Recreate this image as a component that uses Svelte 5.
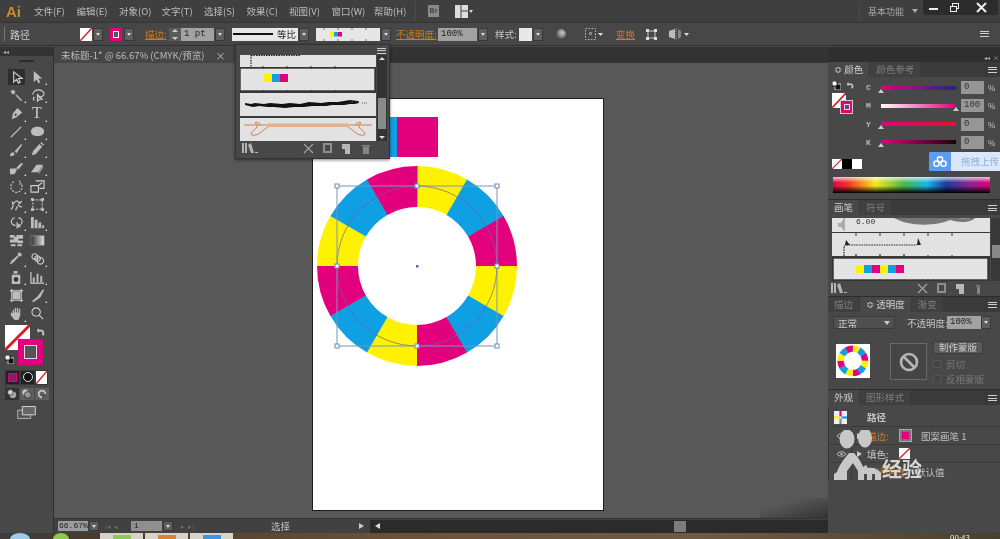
<script>
  const menus = ['文件(F)', '编辑(E)', '对象(O)', '文字(T)', '选择(S)', '效果(C)', '视图(V)', '窗口(W)', '帮助(H)'];

  // tool icons on a 16x16 box: d is filled, l is stroked
  const toolGroups = [
    [
      { l: 'M5 2v11l3-3 2 4 2-1-2-4h4z', selected: true },
      { d: 'M4 1v12l3-3 2 4 2-1-2-4h4z', more: true }
    ],
    [
      { d: 'M8 7l6 6-1 1-6-6zM4 1l1 2 2 0-1 2 1 2-2-1-2 1 0-2-2-1 2-1z', more: true },
      { l: 'M3 7c0-3 3-5 6-5s6 2 6 4-3 4-6 4M5 10c-2 0-2 3 0 3M8 7v7l2-2 3 0z', more: true }
    ],
    [
      { d: 'M3 14l1-6 5-6 5 5-6 5zM7 8a1.3 1.3 0 1 0 .1 0z', more: true },
      { text: 'T', more: true },
      { l: 'M2 14L13 3', more: true },
      { d: 'M8 3c4 0 7 2 7 5s-3 5-7 5-7-2-7-5 3-5 7-5z', more: true },
      { d: 'M1 15c0-3 2-4 4-4l1 2c-1 2-3 2-5 2zM6 10l7-8 1 1-6 9z', more: true },
      { d: 'M2 14l1-4 7-8 3 3-7 8zM11 1l1-1 3 3-1 1z', more: true },
      { d: 'M1 8h8l-3 6H1zM8 7l5-5 2 1-5 6z', more: true },
      { d: 'M1 12l6-8h7l-5 8zM9 13l5-8v2l-5 7z', more: true }
    ],
    [
      { l: 'M5 3a6 6 0 1 0 8 2M11 2l2 3-3 1', dash: true, more: true },
      { l: 'M1 7h8v7H1zM6 2h9v8h-5M9 7l4-3', more: true },
      { l: 'M2 13c2-1 3-4 2-6 2 0 2-3 5-3 0 2 2 2 4 1-1 2-3 2-3 4 1 1 3 2 4 1M3 5l2 2M9 10l-2 4', more: true },
      { l: 'M3 3h10v10H3z', dash: true, d: 'M1 1h3v3H1zM12 1h3v3h-3zM1 12h3v3H1zM12 12h3v3h-3z', more: true },
      { l: 'M6 3a4 4 0 1 0 1 8M10 3a4 4 0 0 1 0 8', d: 'M8 7v8l2-2h3z', more: true },
      { d: 'M1 2h3v12H1zM5 5h3v9H5zM9 8h3v6H9zM13 11h2v3h-2z', more: true },
      { d: 'M1 2h5v3H1zM8 2h7v4H8zM1 7h6v3H1zM9 8h6v3H9zM2 12h5v2H2zM9 12h5v2H9zM5 4h5v6H5z' },
      { grad: true },
      { d: 'M11 1l3 3-2 2-1-1-6 7-3 2-1-1 2-3 7-6-1-1z', more: true },
      { l: 'M5 3a3 3 0 1 0 .1 0M8 5a3 3 0 1 0 .1 0M11 7a3.5 3.5 0 1 0 .1 0', more: true },
      { d: 'M5 1h4v3H5zM3 5h9v10H3z', more: true, hole: true },
      { l: 'M1 2v12h14', d: 'M3 8h2v5H3zM7 4h2v9H7zM11 6h2v7h-2z', more: true },
      { l: 'M1 3h14M1 13h14M3 1v14M13 1v14', d: 'M4 4h8v8H4z' },
      { d: 'M2 14l6-5 6-8 1 1-4 8-7 5z', more: true },
      { d: 'M4 8V4h1.4v3h.8V2h1.4v5h.8V2h1.4v5h.8V3h1.4v7l-2 5H6L2 10V7h1z', more: true },
      { l: 'M6.5 2a4.5 4.5 0 1 0 .1 0M10 10l4 4', more: false }
    ]
  ];

  const sliders = [
    { label: 'C', cls: 'c', value: '0', at: 0 },
    { label: 'M', cls: 'm', value: '100', at: 100 },
    { label: 'Y', cls: 'y', value: '0', at: 0 },
    { label: 'K', cls: 'k', value: '0', at: 0 }
  ];

  const ringColors = ['#fff200', '#0f9fe3', '#e2007d'];
  const cx = 104, cy = 167, R = 100, r = 59;

  function pt(radius, deg) {
    const a = (deg * Math.PI) / 180;
    return (cx + radius * Math.sin(a)).toFixed(2) + ' ' + (cy - radius * Math.cos(a)).toFixed(2);
  }

  const segments = Array.from({ length: 12 }, (_, i) => {
    const a = i * 30, b = a + 30.3;
    return {
      fill: ringColors[i % 3],
      d: `M${pt(R, a)}A${R} ${R} 0 0 1 ${pt(R, b)}L${pt(r, b)}A${r} ${r} 0 0 0 ${pt(r, a)}Z`
    };
  });

  const handles = [[24, 87], [104, 87], [184, 87], [24, 167], [184, 167], [24, 247], [104, 247], [184, 247]];
  const brushTicks = [0, 24, 48, 72];
</script>

{#snippet arrowBtn(kind = '')}
  <span class="arrow-btn {kind}"><i></i></span>
{/snippet}

{#snippet noneSwatch(cls)}
  <svg class={cls} viewBox="0 0 12 12" preserveAspectRatio="none">
    <rect width="12" height="12" fill="#fff" />
    <path d="M0 12L12 0" stroke="#d21f26" stroke-width="1.4" />
  </svg>
{/snippet}

{#snippet panelIcons(cls, shift)}
  <svg class="panel-icons {cls}" viewBox="0 0 150 14">
    <path d="M1 2h2v10H1zM4 2h2v10H4zM7 4l3-2 3 10h-3zM14 11h3v1h-3z" fill="#b4b4b4" />
    <g transform="translate({shift} 0)">
      <path d="M63 3l9 9M72 3l-9 9" stroke="#a2a2a2" stroke-width="1.2" />
      <path d="M82 2h9v10h-9zM84 4h5v6h-5z" fill="#8e8e8e" fill-rule="evenodd" />
      <path d="M101 3h8v10h-5V8h-3z" fill="#b8b8b8" />
      <path d="M121 4h8v1.500h-8zM122 6h6v7h-6z" fill="#858585" />
    </g>
  </svg>
{/snippet}

{#snippet brushRows()}
  <svg class="brush-art" viewBox="0 0 136 86">
    <rect width="136" height="86" fill="#3a3a3a" />
    <rect y="0" width="136" height="12" fill="#e2e2e2" />
    <path d="M11 0v12" stroke="#222" stroke-width="1.2" stroke-dasharray="1.5 1" />
    <path d="M11 0.5h50" stroke="#222" stroke-dasharray="1.5 1" />
    <rect x="0" y="13" width="135" height="23" fill="#e4e4e4" stroke="#333" stroke-width="1.4" />
    {#each brushTicks as t}
      <path d="M{23 + t} 11v3M{23 + t} 35v3" stroke="#333" />
    {/each}
    <rect x="24" y="19" width="8" height="8" fill="#fff200" />
    <rect x="32" y="19" width="8" height="8" fill="#0f9fe3" />
    <rect x="40" y="19" width="8" height="8" fill="#e2007d" />
    <rect y="38" width="136" height="23" fill="#e2e2e2" />
    <path d="M5 48l6 1 4-1 9 1 6-1 12 1 8-1 10 1 9-2 12 1 8-1 9 0 12-2 8 1c2 1 2 3-8 3l-6 1-12 0-6 1-14 0-8 1-10 0-9 1-11-1-6 0-9-1-6 1-8-2z" fill="#111" />
    <path d="M110 47h4M116 47h4M122 48h5" stroke="#555" stroke-dasharray="1 1" />
    <rect y="63" width="136" height="23" fill="#e2e2e2" />
    <path d="M4 70h128" stroke="#c98554" />
    <path d="M28 68.500h80v3.500H28z" fill="#e4b08e" />
    <path d="M20 70c0-3-3-3-5-2 4 1 2 5-1 7-4 3-4 6 1 5 4 0 8-5 13-8M116 70c0-3 3-3 5-2-4 1-2 5 1 7 4 3 4 6-1 5-4 0-8-5-13-8" fill="none" stroke="#d17b43" />
  </svg>
{/snippet}

<div class="app">
  <header class="menubar">
    <span class="logo">Ai</span>
    <nav class="menus">
      {#each menus as m}
        <span class="menu">{m}</span>
      {/each}
    </nav>
    <span class="vsep first"></span>
    <span class="br">Br</span>
    <svg class="arrange" viewBox="0 0 18 13">
      <path d="M0 0h13v13H0z" fill="#ddd" />
      <path d="M6 0v13M6 6h7" stroke="#444" />
      <path d="M14 5h4l-2 3z" fill="#ddd" />
    </svg>
    <span class="vsep second"></span>
    <span class="workspace-name">基本功能</span>
    <i class="tri workspace-tri"></i>
    <div class="win-btns">
      <span class="win"><svg viewBox="0 0 21 15"><path d="M6 8h9v2H6z" fill="#eee" /></svg></span>
      <span class="win"><svg viewBox="0 0 21 15"><path d="M8 3h7v6h-2v3H6V6h2zM9 4v2h4v2h1V4zM7 7v4h5V7z" fill="#eee" fill-rule="evenodd" /></svg></span>
      <span class="win close"><svg viewBox="0 0 33 15"><path d="M12 3l9 9M21 3l-9 9" stroke="#eee" stroke-width="2" /></svg></span>
    </div>
  </header>

  <div class="controlbar">
    <span class="handle"></span>
    <span class="ctl-label">路径</span>
    {@render noneSwatch('ctl-fill')}
    {@render arrowBtn('a1')}
    <span class="ctl-stroke"><i></i></span>
    {@render arrowBtn('a2')}
    <span class="orange stroke-link">描边:</span>
    <span class="spinner"><i></i><b></b></span>
    <span class="field pt">1 pt</span>
    {@render arrowBtn('a3')}
    <span class="line-drop"><i></i><em>等比</em></span>
    {@render arrowBtn('a4')}
    <span class="brush-drop">
      <svg viewBox="0 0 64 13">
        <path d="M8 0v2M8 11v2M22 0v2M22 11v2M36 0v2M36 11v2M50 0v2M50 11v2" stroke="#777" />
        <rect x="14" y="4" width="4" height="4.5" fill="#fff200" />
        <rect x="18" y="4" width="4" height="4.5" fill="#0f9fe3" />
        <rect x="22" y="4" width="4" height="4.5" fill="#e2007d" />
      </svg>
    </span>
    {@render arrowBtn('a5')}
    <span class="orange opacity-link">不透明度:</span>
    <span class="field pct">100%</span>
    {@render arrowBtn('a6')}
    <span class="ctl-label style-label">样式:</span>
    <span class="style-swatch"></span>
    {@render arrowBtn('a7')}
    <span class="globe"></span>
    <svg class="align-icon" viewBox="0 0 18 12">
      <path d="M.5.5h10v11H.5z" fill="none" stroke="#bbb" stroke-dasharray="1.5 1.5" />
      <path d="M4 4h3v3H4z" fill="#888" />
      <path d="M13 5h5l-2.500 3z" fill="#ddd" />
    </svg>
    <span class="orange transform-link">变换</span>
    <svg class="frame-icon" viewBox="0 0 11 11">
      <path d="M2 2h7v7H2z" fill="none" stroke="#ccc" />
      <path d="M0 0h3v3H0zM8 0h3v3H8zM0 8h3v3H0zM8 8h3v3H8z" fill="#ddd" />
    </svg>
    <svg class="flip-icon" viewBox="0 0 20 12">
      <path d="M0 3l6-2v10l-6-2z" fill="#bbb" />
      <path d="M7 0v12" stroke="#999" stroke-dasharray="1.500 1" />
      <path d="M9 1l3 2v6l-3 2z" fill="#888" />
      <path d="M15 5h5l-2.500 3z" fill="#ddd" />
    </svg>
    <span class="panel-menu ctl-menu"></span>
  </div>

  <div class="workspace">
    <aside class="toolbar">
      <div class="tool-head">◂◂</div>
      <div class="grip"></div>
      {#each toolGroups as group}
        <div class="tool-grid">
          {#each group as t}
            <span class="tool" class:selected={t.selected}>
              {#if t.text}
                <span class="tool-t">{t.text}</span>
              {:else}
                <svg viewBox="0 0 16 16">
                  {#if t.grad}
                    <defs>
                      <linearGradient id="toolgrad"><stop offset="0" stop-color="#333" /><stop offset="1" stop-color="#ddd" /></linearGradient>
                    </defs>
                    <rect x="1" y="3" width="14" height="10" fill="url(#toolgrad)" stroke="#aaa" stroke-width=".5" />
                  {/if}
                  {#if t.d}<path d={t.d} fill="#bdbdbd" />{/if}
                  {#if t.hole}<circle cx="7.500" cy="10" r="2.500" fill="#333" />{/if}
                  {#if t.l}<path d={t.l} fill="none" stroke="#cfcfcf" stroke-width="1.200" stroke-dasharray={t.dash ? '2 1.500' : 'none'} />{/if}
                </svg>
              {/if}
              {#if t.more}<i class="more"></i>{/if}
            </span>
          {/each}
        </div>
      {/each}

      <div class="fillstroke">
        {@render noneSwatch('big-fill')}
        <span class="big-stroke"><i></i></span>
        <svg class="swap" viewBox="0 0 10 10"><path d="M1 4l2-3v2h4l2 2v3l1-1-2 3-2-3 1 1V5H3v2z" fill="#ccc" /></svg>
        <svg class="defaults" viewBox="0 0 9 9"><path d="M3 3h6v6H3z" fill="#111" stroke="#ccc" /><path d="M0 0h5v5H0z" fill="#fff" stroke="#111" /></svg>
      </div>

      <div class="modes">
        <span class="mode"><i class="m-color"></i></span>
        <span class="mode"><i class="m-grad"></i></span>
        {@render noneSwatch('m-none')}
      </div>

      <div class="draw-modes">
        <span><svg viewBox="0 0 12 12"><circle cx="7" cy="7" r="4" fill="#aaa" /><circle cx="4" cy="4" r="3.500" fill="#ccc" stroke="#333" /></svg></span>
        <span><svg viewBox="0 0 12 12"><circle cx="4" cy="4" r="3.500" fill="#ccc" /><circle cx="7" cy="7" r="4" fill="#999" stroke="#333" /></svg></span>
        <span><svg viewBox="0 0 12 12"><circle cx="6" cy="6" r="4" fill="none" stroke="#ccc" stroke-width="2" /><path d="M6 6h5v5H6z" fill="#555" /></svg></span>
      </div>

      <svg class="screen-mode" viewBox="0 0 20 14">
        <path d="M.5 4.500h14v9H.5z" fill="#555" stroke="#bbb" />
        <path d="M5.500.5h14v9H5.500z" fill="#666" stroke="#ddd" />
      </svg>
    </aside>

    <main class="center">
      <div class="tabs">
        <div class="doc-tab">
          <span>未标题-1* @ 66.67% (CMYK/预览)</span>
          <span class="tab-x">×</span>
        </div>
      </div>

      <div class="canvas">
        <div class="artboard">
          <svg class="art" viewBox="0 0 290 411" width="290" height="411">
            <rect x="3" y="58" width="41" height="1" fill="#fff200" />
            <rect x="44" y="18" width="40" height="40" fill="#0f9fe3" />
            <rect x="84" y="18" width="41" height="40" fill="#e2007d" />
            {#each segments as s}
              <path d={s.d} fill={s.fill} />
            {/each}
            <circle cx={cx} cy={cy} r="80" fill="none" stroke="#6f5da8" stroke-width=".7" />
            <rect x="24" y="87" width="160" height="160" fill="none" stroke="#7d93bd" />
            {#each handles as h}
              <rect x={h[0] - 2} y={h[1] - 2} width="4" height="4" fill="#fff" stroke="#6f8ab8" />
            {/each}
            <rect x="103" y="166" width="2.500" height="2.500" fill="#3f68d8" />
          </svg>
        </div>
        <div class="corner-shade"></div>
      </div>

      <div class="statusbar">
        <span class="field zoom">66.67%</span>
        {@render arrowBtn('s1')}
        <span class="pager first-pager">|◂ &nbsp;◂</span>
        <span class="field page">1</span>
        {@render arrowBtn('s2')}
        <span class="pager next-pager">▸ &nbsp;▸|</span>
        <span class="status-text">选择</span>
        <i class="tri-r status-next"></i>
        <div class="hscroll">
          <i class="tri-l"></i>
          <span class="thumb"></span>
        </div>
      </div>
    </main>

    <aside class="panels">
      <div class="dock-head">◂◂ &nbsp;×</div>

      <section class="panel color-panel">
        <div class="ptabs">
          <span class="ptab on">≎ 颜色</span>
          <span class="ptab">颜色参考</span>
          <span class="panel-menu"></span>
        </div>
        <div class="color-body">
          <div class="mini-fs">
            <svg class="mini-defaults" viewBox="0 0 9 9"><path d="M3 3h6v6H3z" fill="#111" stroke="#ccc" /><path d="M0 0h5v5H0z" fill="#fff" stroke="#111" /></svg>
            <svg class="mini-swap" viewBox="0 0 10 10"><path d="M1 4l2-3v2h4l2 2v3l1-1-2 3-2-3 1 1V5H3v2z" fill="#ccc" /></svg>
            {@render noneSwatch('mini-fill')}
            <span class="mini-stroke"><i></i></span>
          </div>
          <div class="sliders">
            {#each sliders as s}
              <div class="slider-row">
                <span class="slider-label">{s.label}</span>
                <span class="track {s.cls}"><i class="knob" style="left: {s.at}%"></i></span>
                <span class="field val">{s.value}</span>
                <span class="pct-sign">%</span>
              </div>
            {/each}
          </div>
          <div class="quick-swatches">
            {@render noneSwatch('q')}
            <span class="q black"></span>
            <span class="q white"></span>
          </div>
          <div class="spectrum"></div>
          <div class="upload">
            <span class="upload-icon">
              <svg viewBox="0 0 16 14"><circle cx="8" cy="4.500" r="3" fill="none" stroke="#fff" stroke-width="1.600" /><circle cx="4" cy="9.500" r="3" fill="none" stroke="#fff" stroke-width="1.600" /><circle cx="12" cy="9.500" r="3" fill="none" stroke="#fff" stroke-width="1.600" /></svg>
            </span>
            <span class="upload-text">拖拽上传</span>
          </div>
        </div>
      </section>

      <section class="panel brush-panel">
        <div class="ptabs">
          <span class="ptab on">画笔</span>
          <span class="ptab">符号</span>
          <span class="panel-menu"></span>
        </div>
        <div class="brush-list">
          <svg viewBox="0 0 158 63" width="158" height="63">
            <rect width="158" height="63" fill="#3a3a3a" />
            <rect width="158" height="14" fill="#e2e2e2" />
            <path d="M6 5h3l3-5h1v13h-1L9 9H6z" fill="#aaa" />
            <text x="24" y="6" font-size="8" font-family="Liberation Mono, monospace" fill="#333">6.00</text>
            <path d="M62 0h60c10 0 14 1 22-1-4 6-16 6-26 3-14 6-40 7-56-2z" fill="#777" />
            <rect y="15" width="158" height="23" fill="#e2e2e2" />
            <path d="M12 38V28l3-1h70" fill="none" stroke="#222" stroke-dasharray="1.500 1" stroke-width="1.200" />
            <path d="M14 22l4 5h-5zM86 20l3 7h-4z" fill="#222" />
            <path d="M24 15v3M48 15v3M72 15v3M96 15v3M120 15v3M24 36v3M48 36v3M72 36v3" stroke="#333" />
            <rect x="1" y="40" width="155" height="22" fill="#e4e4e4" stroke="#333" stroke-width="1.400" />
            <path d="M24 37v3M48 37v3M72 37v3M96 37v3M120 37v3M24 61v2M48 61v2M72 61v2M96 61v2" stroke="#333" />
            {#each [0, 1, 2, 3, 4, 5] as i}
              <rect x={24 + i * 8} y="47" width="8" height="8" fill={ringColors[i % 3]} />
            {/each}
          </svg>
          <div class="mini-scroll"><i></i></div>
        </div>
        {@render panelIcons('in-panel', 25)}
      </section>

      <section class="panel transparency-panel">
        <div class="ptabs">
          <span class="ptab">描边</span>
          <span class="ptab on">≎ 透明度</span>
          <span class="ptab">渐变</span>
          <span class="panel-menu"></span>
        </div>
        <div class="blend-row">
          <span class="blend">正常<i class="tri"></i></span>
          <span class="opacity-text">不透明度:</span>
          <span class="field pct2">100%</span>
          {@render arrowBtn('a8')}
        </div>
        <div class="mask-row">
          <span class="thumb-box">
            <svg viewBox="0 0 36 36" width="36" height="36">
              <rect width="36" height="36" fill="#fff" />
              <g transform="translate(1.780 -7.900) scale(.154)">
                {#each segments as s}
                  <path d={s.d} fill={s.fill} stroke={s.fill} stroke-width=".5" />
                {/each}
              </g>
              <rect width="36" height="36" fill="none" stroke="#111" stroke-width="1.500" />
            </svg>
          </span>
          <span class="no-mask">
            <svg viewBox="0 0 20 20"><circle cx="10" cy="10" r="8" fill="none" stroke="#b5b5b5" stroke-width="2.600" /><path d="M4.500 4.500l11 11" stroke="#b5b5b5" stroke-width="2.600" /></svg>
          </span>
          <div class="mask-actions">
            <span class="mask-btn">制作蒙版</span>
            <label class="check"><i></i>剪切</label>
            <label class="check"><i></i>反相蒙版</label>
          </div>
        </div>
      </section>

      <section class="panel appearance-panel">
        <div class="ptabs">
          <span class="ptab on">外观</span>
          <span class="ptab">图形样式</span>
          <span class="panel-menu"></span>
        </div>
        <div class="app-list">
          <div class="app-row title">
            <span class="cross-icon"><svg viewBox="0 0 12 12"><path d="M5 0h2v5H5z" fill="#e2007d" /><path d="M0 5h5v2H0z" fill="#fff200" /><path d="M7 5h5v2H7z" fill="#0f9fe3" /><path d="M5 7h2v5H5z" fill="#888" /></svg></span>
            <b>路径</b>
          </div>
          <div class="app-row">
            <span class="eye-col"><svg viewBox="0 0 9 6"><path d="M0 3c2-3 7-3 9 0-2 3-7 3-9 0z" fill="none" stroke="#bbb" /><circle cx="4.500" cy="3" r="1.200" fill="#bbb" /></svg></span>
            <i class="tri-r row-tri"></i>
            <span class="orange app-name">描边:</span>
            <span class="app-swatch"><i></i></span>
            <span class="app-value">图案画笔 1</span>
          </div>
          <div class="app-row">
            <span class="eye-col"><svg viewBox="0 0 9 6"><path d="M0 3c2-3 7-3 9 0-2 3-7 3-9 0z" fill="none" stroke="#bbb" /><circle cx="4.500" cy="3" r="1.200" fill="#bbb" /></svg></span>
            <i class="tri-r row-tri"></i>
            <span class="app-name">填色:</span>
            {@render noneSwatch('app-none')}
          </div>
          <div class="app-row">
            <span class="eye-col"></span>
            <span class="orange app-name spaced">不透明度:</span>
            <span class="app-value">默认值</span>
          </div>
        </div>
        <div class="watermark">
          <svg viewBox="0 0 48 50" width="48" height="50">
            <ellipse cx="14" cy="9" rx="7.500" ry="9.500" fill="#c8c8c8" />
            <ellipse cx="32" cy="8" rx="7" ry="9.500" fill="#c8c8c8" />
            <path d="M1 50v-6l3-2c2-7 8-14 12-19h5c4 5 7 8 9 14l3-2 2 3c5-1 10 1 13 5v7h-6v-6h-3v6h-5v-6h-3v6h-6v-9l-5-8-6 8v9z" fill="#c8c8c8" />
          </svg>
          <span>经验</span>
        </div>
      </section>
    </aside>

    <div class="brush-popup">
      <div class="popup-head"><span class="panel-menu"></span></div>
      <div class="popup-body">
        {@render brushRows()}
        <div class="popup-scroll"><i class="up"></i><span></span><i class="down"></i></div>
      </div>
      {@render panelIcons('in-popup', 0)}
    </div>
  </div>

  <footer class="taskbar">
    <span class="orb"></span>
    <span class="orb green"></span>
    <span class="task"><i class="tint-green"></i></span>
    <span class="task"><i class="tint-orange"></i></span>
    <span class="task"><i class="tint-blue"></i></span>
    <span class="clock">00:43</span>
  </footer>
</div>

<style>
  :global(body) {
    margin: 0;
    background: #3c3c3c;
    overflow: hidden;
  }

  .app {
    width: 1000px;
    height: 539px;
    overflow: hidden;
    display: flex;
    flex-direction: column;
    font-family: "Noto Sans CJK SC", "Liberation Sans", sans-serif;
    font-size: 9.5px;
    color: #c4c4c4;
    background: #484848;
    filter: blur(0.35px);
  }

  .menubar {
    height: 22px;
    flex: none;
    display: flex;
    align-items: center;
    background: #3f3f3f;
    position: relative;
  }

  .logo {
    width: 34px;
    box-sizing: border-box;
    padding-left: 6px;
    font: bold 15px "Liberation Sans", sans-serif;
    color: #d08a35;
  }

  .menus {
    display: flex;
    width: 380px;
  }

  .menu {
    width: 42.5px;
    flex: none;
    white-space: nowrap;
    color: #bdbdbd;
  }

  .vsep {
    width: 1px;
    height: 18px;
    background: #4d4d4d;
  }

  .vsep.first {
    margin-left: 1px;
  }

  .br {
    width: 11px;
    height: 12px;
    margin-left: 12px;
    background: #8a8a8a;
    color: #444;
    font: bold 7px/12px "Liberation Sans", sans-serif;
    text-align: center;
  }

  .arrange {
    width: 18px;
    height: 13px;
    margin-left: 16px;
  }

  .vsep.second {
    margin-left: 386px;
  }

  .workspace-name {
    margin-left: 8px;
    color: #a8a8a8;
    width: 36px;
    font-size: 9px;
    white-space: nowrap;
  }

  .tri {
    display: inline-block;
    border: 3px solid transparent;
    border-top: 4px solid #ccc;
    border-bottom: 0;
  }

  .workspace-tri {
    margin-left: 8px;
    border-top-color: #aaa;
  }

  .win-btns {
    display: flex;
    height: 15px;
    margin-left: 5px;
    align-self: flex-start;
    background: #2c2c2c;
    border-radius: 0 0 3px 3px;
  }

  .win {
    width: 21px;
    height: 15px;
    display: block;
  }

  .win.close {
    width: 33px;
  }

  .win svg {
    display: block;
    width: 100%;
    height: 100%;
  }

  .controlbar {
    height: 24px;
    flex: none;
    box-sizing: border-box;
    display: flex;
    align-items: center;
    background: #474747;
    border-top: 1px solid #333;
    border-bottom: 1px solid #303030;
    margin-bottom: 1px;
    position: relative;
  }

  .handle {
    width: 1px;
    height: 14px;
    margin-left: 4px;
    background: #777;
  }

  .ctl-label {
    margin-left: 5px;
    color: #c8c8c8;
    font-size: 10px;
    width: 20px;
    white-space: nowrap;
  }

  :global(.ctl-fill) {
    width: 12px;
    height: 13px;
    margin-left: 50px;
  }

  .arrow-btn {
    width: 10px;
    height: 13px;
    flex: none;
    background: #5e5e5e;
    border: 1px solid #383838;
    box-sizing: border-box;
    display: flex;
    align-items: center;
    justify-content: center;
  }

  .arrow-btn i {
    border: 2.5px solid transparent;
    border-top: 3px solid #ddd;
    border-bottom: 0;
  }

  .a1 { margin-left: 1px; }
  .a2 { margin-left: 2px; }
  .a3 { margin-left: 1px; }
  .a4 { margin-left: 1px; }
  .a5 { margin-left: 1px; }
  .a6 { margin-left: 1px; }
  .a7 { margin-left: 1px; }
  .a8 { margin-left: 0; }

  .ctl-stroke {
    width: 12px;
    height: 13px;
    margin-left: 7px;
    background: #e2007d;
    display: flex;
    align-items: center;
    justify-content: center;
  }

  .ctl-stroke i {
    width: 4px;
    height: 5px;
    background: #555;
    border: 1px solid #fff;
  }

  .orange {
    color: #c67c28;
  }

  .stroke-link {
    margin-left: 11px;
    width: 22px;
    white-space: nowrap;
    text-decoration: underline;
  }

  .spinner {
    width: 12px;
    height: 13px;
    margin-left: 2px;
    background: #5a5a5a;
    position: relative;
  }

  .spinner i,
  .spinner b {
    position: absolute;
    left: 3px;
    border: 3px solid transparent;
  }

  .spinner i {
    top: -2px;
    border-bottom-color: #ccc;
  }

  .spinner b {
    bottom: -2px;
    border-top-color: #ccc;
  }

  .field {
    display: block;
    box-sizing: border-box;
    background: #a2a2a2;
    color: #222;
    font: 9px/13px "Liberation Mono", monospace;
    height: 13px;
    padding-left: 3px;
    flex: none;
    white-space: nowrap;
  }

  .field.pt {
    width: 33px;
  }

  .line-drop {
    width: 66px;
    height: 13px;
    margin-left: 7px;
    background: #e8e8e8;
    display: flex;
    align-items: center;
    color: #222;
  }

  .line-drop i {
    width: 40px;
    height: 1.5px;
    margin-left: 1px;
    background: #111;
  }

  .line-drop em {
    font-style: normal;
    margin-left: 4px;
  }

  .brush-drop {
    width: 64px;
    height: 13px;
    margin-left: 7px;
    background: #e6e6e6;
  }

  .brush-drop svg {
    display: block;
  }

  .opacity-link {
    margin-left: 5px;
    width: 39px;
    white-space: nowrap;
    text-decoration: underline;
  }

  .field.pct {
    width: 39px;
    margin-left: 3px;
  }

  .style-label {
    margin-left: 7px;
    font-size: 9.5px;
    width: 20px;
  }

  .style-swatch {
    width: 13px;
    height: 13px;
    margin-left: 4px;
    background: #e8e8e8;
  }

  .globe {
    width: 10px;
    height: 10px;
    margin-left: 13px;
    border-radius: 50%;
    background: radial-gradient(circle at 60% 40%, #ccc, #555 70%);
  }

  .align-icon {
    width: 18px;
    height: 12px;
    margin-left: 19px;
  }

  .transform-link {
    margin-left: 13px;
    width: 18px;
    white-space: nowrap;
    text-decoration: underline;
  }

  .frame-icon {
    width: 11px;
    height: 11px;
    margin-left: 12px;
  }

  .flip-icon {
    width: 20px;
    height: 12px;
    margin-left: 12px;
  }

  .panel-menu {
    display: block;
    width: 9px;
    height: 6px;
    margin-left: auto;
    background: repeating-linear-gradient(#cfcfcf 0 1px, transparent 1px 2.5px);
  }

  .ctl-menu {
    margin-right: 11px;
  }

  .workspace {
    flex: 1;
    min-height: 0;
    display: flex;
    position: relative;
    background: #2f2f2f;
  }

  .toolbar {
    width: 53px;
    flex: none;
    margin-right: 1px;
    background: #484848;
    display: flex;
    flex-direction: column;
    align-items: center;
  }

  .tool-head {
    align-self: stretch;
    height: 9px;
    padding-left: 3px;
    background: #333;
    font-size: 6px;
    line-height: 9px;
    color: #aaa;
  }

  .grip {
    width: 15px;
    height: 2px;
    margin: 4px 0 6px;
    background: #2c2c2c;
  }

  .tool-grid {
    display: grid;
    grid-template-columns: 21px 21px;
    grid-auto-rows: 18.2px;
  }

  .tool {
    position: relative;
    display: flex;
    align-items: center;
    justify-content: center;
  }

  .tool.selected {
    background: #2e2e2e;
    margin: 1px 2px;
  }

  .tool svg {
    width: 15px;
    height: 15px;
  }

  .tool-t {
    font: 16px "Liberation Serif", serif;
    color: #ccc;
  }

  .more {
    position: absolute;
    right: 1px;
    bottom: 1px;
    border: 1.5px solid transparent;
    border-right-color: #ddd;
    border-bottom-color: #ddd;
  }

  .fillstroke {
    position: relative;
    width: 44px;
    height: 42px;
    margin-top: 2px;
  }

  :global(.big-fill) {
    position: absolute;
    left: 0;
    top: 0;
    width: 25px;
    height: 25px;
  }

  .big-stroke {
    position: absolute;
    left: 13px;
    top: 14px;
    width: 25px;
    height: 26px;
    background: #e2007d;
    display: flex;
    align-items: center;
    justify-content: center;
  }

  .big-stroke i {
    width: 11px;
    height: 12px;
    background: #555;
    border: 1px solid #ddd;
  }

  .swap {
    position: absolute;
    left: 31px;
    top: 2px;
    width: 9px;
    height: 9px;
  }

  .defaults {
    position: absolute;
    left: 0;
    top: 30px;
    width: 9px;
    height: 9px;
  }

  .modes {
    display: flex;
    align-items: center;
    gap: 2px;
    margin-top: 3px;
    padding: 1px;
    background: #383838;
  }

  .mode {
    width: 13px;
    height: 13px;
    background: #222;
    display: flex;
    align-items: center;
    justify-content: center;
  }

  .m-color {
    width: 7px;
    height: 7px;
    background: #8a1c62;
    border: 1px solid #e2007d;
  }

  .m-grad {
    width: 8px;
    height: 8px;
    border-radius: 50%;
    background: #111;
    border: 1px solid #ddd;
  }

  :global(.m-none) {
    width: 11px;
    height: 13px;
  }

  .draw-modes {
    display: flex;
    gap: 1px;
    margin-top: 3px;
  }

  .draw-modes span {
    width: 14px;
    height: 12px;
    background: #5f5f5f;
    display: flex;
    align-items: center;
    justify-content: center;
  }

  .draw-modes span:first-child {
    background: #333;
  }

  .draw-modes svg {
    width: 10px;
    height: 10px;
  }

  .screen-mode {
    width: 19px;
    height: 13px;
    margin-top: 6px;
  }

  .center {
    flex: 1;
    min-width: 0;
    display: flex;
    flex-direction: column;
  }

  .tabs {
    height: 16px;
    flex: none;
    background: #333;
  }

  .doc-tab {
    width: 181px;
    height: 16px;
    display: flex;
    align-items: center;
    padding-left: 7px;
    box-sizing: border-box;
    background: #464646;
    color: #bbb;
    font-size: 9.5px;
    white-space: nowrap;
  }

  .tab-x {
    margin-left: 11px;
    font-size: 10px;
  }

  .canvas {
    flex: 1;
    min-height: 0;
    position: relative;
    background: #585858;
    padding: 36px 0 0 259px;
  }

  .artboard {
    width: 290px;
    height: 411px;
    background: #fff;
    box-shadow: 0 0 0 1px #1d1d1d;
  }

  .art {
    display: block;
    overflow: visible;
  }

  .corner-shade {
    position: absolute;
    right: 0;
    bottom: 0;
    width: 68px;
    height: 20px;
    background: linear-gradient(to bottom right, transparent 30%, #333);
  }

  .statusbar {
    height: 14px;
    flex: none;
    display: flex;
    align-items: center;
    padding-left: 4px;
    background: #414141;
    border-top: 1px solid #333;
    box-sizing: content-box;
  }

  .field.zoom {
    width: 30px;
    height: 10px;
    line-height: 10px;
    padding-left: 1px;
    font-size: 8px;
    background: #9c9c9c;
  }

  .statusbar .arrow-btn {
    height: 10px;
    margin-left: 1px;
  }

  .pager {
    font-size: 7px;
    color: #6d6d6d;
    white-space: nowrap;
  }

  .first-pager {
    width: 26px;
    margin-left: 6px;
  }

  .field.page {
    width: 31px;
    height: 10px;
    line-height: 10px;
    font-size: 8px;
    background: #8f8f8f;
  }

  .next-pager {
    width: 20px;
    margin-left: 8px;
  }

  .status-text {
    margin-left: 70px;
    width: 20px;
    white-space: nowrap;
    color: #c0c0c0;
  }

  .tri-r {
    border: 3px solid transparent;
    border-left: 5px solid #ccc;
    border-right: 0;
  }

  .status-next {
    margin-left: 68px;
  }

  .hscroll {
    margin-left: 6px;
    flex: 1;
    height: 13px;
    background: #2b2b2b;
    position: relative;
    display: flex;
    align-items: center;
    padding-left: 5px;
  }

  .tri-l {
    border: 3px solid transparent;
    border-right: 5px solid #ddd;
    border-left: 0;
  }

  .thumb {
    position: absolute;
    left: 304px;
    top: 1px;
    width: 12px;
    height: 11px;
    background: #7d7d7d;
  }

  .panels {
    width: 172px;
    flex: none;
    display: flex;
    flex-direction: column;
    background: #3a3a3a;
  }

  .dock-head {
    height: 15px;
    padding-top: 6px;
    box-sizing: border-box;
    text-align: right;
    padding-right: 1px;
    font-size: 6px;
    line-height: 9px;
    color: #aaa;
    background: #2f2f2f;
  }

  .panel {
    background: #484848;
    position: relative;
    border-bottom: 1px solid #2c2c2c;
  }

  .ptabs {
    height: 15px;
    display: flex;
    align-items: stretch;
    background: #3a3a3a;
    padding-right: 3px;
  }

  .ptab {
    padding: 0 6px;
    line-height: 15px;
    color: #7e7e7e;
    white-space: nowrap;
    background: #404040;
    margin-right: 1px;
  }

  .ptab.on {
    background: #484848;
    color: #d0d0d0;
  }

  .ptabs .panel-menu {
    align-self: center;
  }

  .color-panel {
    height: 137px;
  }

  .color-body {
    position: relative;
    height: 121px;
  }

  .mini-fs {
    position: absolute;
    left: 4px;
    top: 4px;
    width: 24px;
    height: 40px;
  }

  .mini-defaults {
    position: absolute;
    left: 0;
    top: 0;
    width: 9px;
    height: 9px;
  }

  .mini-swap {
    position: absolute;
    left: 14px;
    top: 0;
    width: 8px;
    height: 8px;
  }

  :global(.mini-fill) {
    position: absolute;
    left: 0;
    top: 12px;
    width: 14px;
    height: 15px;
  }

  .mini-stroke {
    position: absolute;
    left: 8px;
    top: 19px;
    width: 13px;
    height: 14px;
    background: #e2007d;
    border: 1px solid #ccc;
    box-sizing: border-box;
    display: flex;
    align-items: center;
    justify-content: center;
  }

  .mini-stroke i {
    width: 4px;
    height: 4px;
    background: #555;
    border: 1px solid #ddd;
  }

  .sliders {
    position: absolute;
    left: 38px;
    top: 4px;
    display: flex;
    flex-direction: column;
    gap: 5.3px;
  }

  .slider-row {
    display: flex;
    align-items: center;
    height: 13px;
  }

  .slider-label {
    width: 15px;
    font: bold 8px "Liberation Mono", monospace;
    color: #bbb;
  }

  .track {
    width: 75px;
    height: 4px;
    position: relative;
    flex: none;
  }

  .track.c { background: linear-gradient(to right, #e2007d, #1d2a80); }
  .track.m { background: linear-gradient(to right, #fff, #e2007d); }
  .track.y { background: linear-gradient(to right, #e2007d, #e8102a); }
  .track.k { background: linear-gradient(to right, #e2007d, #1c0010); }

  .knob {
    position: absolute;
    top: 3px;
    margin-left: -3px;
    border: 3px solid transparent;
    border-bottom: 4px solid #ccc;
    border-top: 0;
  }

  .field.val {
    width: 23px;
    margin-left: 5px;
    background: #969696;
    color: #333;
  }

  .pct-sign {
    margin-left: 4px;
    font-size: 8px;
  }

  .quick-swatches {
    position: absolute;
    left: 4px;
    top: 82px;
    display: flex;
  }

  :global(.q),
  .q {
    width: 10px;
    height: 10px;
    display: block;
  }

  .q.black { background: #000; }
  .q.white { background: #fff; }

  .spectrum {
    position: absolute;
    left: 5px;
    top: 100px;
    width: 157px;
    height: 16px;
    background:
      linear-gradient(to bottom, rgba(255, 255, 255, 0.75), transparent 35%, transparent 55%, #000),
      linear-gradient(to right, #e2004f, #ef3a24 10%, #f5e81f 27%, #4bb84a 45%, #19b5e8 60%, #1c3a9e 72%, #7a2a90 85%, #e2007d);
  }

  .upload {
    position: absolute;
    left: 101px;
    top: 75px;
    width: 71px;
    height: 19px;
    display: flex;
    border-radius: 3px 0 0 3px;
    overflow: hidden;
    background: #dbe8fa;
  }

  .upload-icon {
    width: 22px;
    background: #5a9df3;
    display: flex;
    align-items: center;
    justify-content: center;
  }

  .upload-icon svg {
    width: 14px;
    height: 13px;
  }

  .upload-text {
    margin-left: 10px;
    line-height: 19px;
    color: #8fb2dc;
    white-space: nowrap;
  }

  .brush-panel {
    height: 96px;
  }

  .brush-list {
    display: flex;
    margin: 3px 0 0 4px;
    height: 63px;
  }

  .brush-list svg {
    display: block;
    flex: none;
  }

  .mini-scroll {
    width: 10px;
    background: #383838;
    position: relative;
    margin-left: 1px;
  }

  .mini-scroll i {
    position: absolute;
    left: 1px;
    top: 27px;
    width: 8px;
    height: 13px;
    background: #888;
  }

  :global(.panel-icons) {
    display: block;
    width: 150px;
    height: 14px;
  }

  :global(.panel-icons.in-panel) {
    margin-left: 2px;
  }

  :global(.panel-icons.in-popup) {
    margin-left: 5px;
  }

  .transparency-panel {
    height: 92px;
  }

  .blend-row {
    display: flex;
    align-items: center;
    margin: 4px 0 0 5px;
    height: 13px;
  }

  .blend {
    width: 62px;
    height: 13px;
    box-sizing: border-box;
    padding: 0 5px;
    background: #505050;
    display: flex;
    align-items: center;
    justify-content: space-between;
    color: #ccc;
    box-shadow: inset 0 0 0 1px #3a3a3a;
  }

  .opacity-text {
    margin-left: 12px;
    width: 39px;
    white-space: nowrap;
    color: #c4c4c4;
  }

  .field.pct2 {
    width: 34px;
    margin-left: 1px;
    background: #a2a2a2;
  }

  .mask-row {
    display: flex;
    margin: 14px 0 0 7px;
    position: relative;
  }

  .thumb-box {
    width: 36px;
    height: 36px;
    display: block;
  }

  .thumb-box svg {
    display: block;
  }

  .no-mask {
    width: 37px;
    height: 37px;
    margin-left: 19px;
    box-sizing: border-box;
    border: 1px solid #6a6a6a;
    background: #454545;
    display: flex;
    align-items: center;
    justify-content: center;
  }

  .no-mask svg {
    width: 20px;
    height: 20px;
  }

  .mask-actions {
    margin-left: 6px;
    margin-top: -2px;
    display: flex;
    flex-direction: column;
  }

  .mask-btn {
    width: 50px;
    height: 13px;
    line-height: 13px;
    text-align: center;
    background: #595959;
    color: #ccc;
    box-shadow: inset 0 0 0 1px #3e3e3e;
    white-space: nowrap;
  }

  .check {
    display: flex;
    align-items: center;
    gap: 5px;
    height: 14px;
    margin-top: 1px;
    color: #777;
    white-space: nowrap;
  }

  .check:nth-child(2) {
    margin-top: 3px;
  }

  .check i {
    width: 6px;
    height: 6px;
    border: 1px solid #555;
    background: #444;
  }

  .appearance-panel {
    flex: 1;
    border-bottom: 0;
    min-height: 0;
    overflow: hidden;
  }

  .app-list {
    margin-top: 3px;
    border-left: 1px solid #333;
  }

  .app-row {
    height: 18px;
    display: flex;
    align-items: center;
    border-top: 1px solid #3a3a3a;
    box-sizing: border-box;
    padding-left: 5px;
  }

  .app-row.title {
    border-top: 0;
  }

  .app-row.title b {
    margin-left: 20px;
    font-size: 9.5px;
  }

  .cross-icon {
    width: 13px;
    height: 13px;
    background: #eee;
    display: block;
  }

  .cross-icon svg {
    display: block;
  }

  .eye-col {
    width: 18px;
    height: 17px;
    flex: none;
    display: flex;
    align-items: center;
    border-right: 1px solid #3a3a3a;
    box-sizing: border-box;
  }

  .eye-col svg {
    width: 9px;
    height: 6px;
    margin-left: 3px;
  }

  .row-tri {
    margin-left: 5px;
    flex: none;
  }

  .app-name {
    margin-left: 5px;
    width: 28px;
    white-space: nowrap;
  }

  .app-name.spaced {
    margin-left: 15px;
    width: 40px;
  }

  .app-swatch {
    width: 11px;
    height: 11px;
    border: 1px solid #aaa;
    display: flex;
    align-items: center;
    justify-content: center;
    margin-left: 4px;
    background: #777;
  }

  .app-swatch i {
    width: 7px;
    height: 7px;
    background: #e2007d;
  }

  .app-value {
    margin-left: 9px;
    color: #c0c0c0;
    white-space: nowrap;
  }

  :global(.app-none) {
    width: 11px;
    height: 11px;
    margin-left: 4px;
  }

  .watermark {
    position: absolute;
    left: 5px;
    top: 40px;
    display: flex;
    align-items: flex-end;
    gap: 1px;
    color: #d6d6d6;
  }

  .watermark span {
    font-size: 20px;
    line-height: 22px;
    font-weight: 700;
  }

  .brush-popup {
    position: absolute;
    left: 235px;
    top: -3px;
    width: 155px;
    height: 115px;
    box-sizing: border-box;
    background: #484848;
    border: 1px solid #333;
    box-shadow: 0 1px 3px rgba(0, 0, 0, 0.5);
  }

  .popup-head {
    height: 10px;
    padding: 3px 3px 0 0;
    box-sizing: border-box;
    display: flex;
  }

  .popup-body {
    display: flex;
    margin-left: 4px;
    height: 86px;
  }

  :global(.brush-art) {
    width: 136px;
    height: 86px;
    flex: none;
    display: block;
  }

  .popup-scroll {
    width: 10px;
    background: #333;
    margin-left: 1px;
    position: relative;
  }

  .popup-scroll span {
    position: absolute;
    left: 1px;
    top: 43px;
    width: 8px;
    height: 31px;
    background: #8a8a8a;
  }

  .popup-scroll i {
    position: absolute;
    left: 2px;
    border: 3px solid transparent;
  }

  .popup-scroll .up {
    top: 2px;
    border-bottom-color: #ddd;
    border-top: 0;
  }

  .popup-scroll .down {
    bottom: 2px;
    border-top-color: #ddd;
    border-bottom: 0;
  }

  .taskbar {
    height: 6px;
    flex: none;
    display: flex;
    align-items: flex-start;
    background: linear-gradient(to right, #3c3c3c, #4a3a2c 10%, #6a5238 40%, #6f5a44 70%, #4a4030);
    position: relative;
    overflow: hidden;
  }

  .orb {
    width: 20px;
    height: 12px;
    margin-left: 10px;
    border-radius: 50%;
    background: #9ccde8;
  }

  .orb.green {
    width: 16px;
    margin-left: 23px;
    background: #8fc84a;
  }

  .task {
    width: 43px;
    height: 6px;
    margin-left: 2px;
    background: #d8d2c8;
    display: flex;
    justify-content: center;
  }

  .task i {
    width: 18px;
    height: 6px;
    margin-top: 2px;
  }

  .tint-green { background: #8fc84a; }
  .tint-orange { background: #d8842c; }
  .tint-blue { background: #3f94e0; }

  .orb.green + .task {
    margin-left: 31px;
  }

  .clock {
    position: absolute;
    left: 950px;
    top: 1px;
    font-size: 8px;
    line-height: 8px;
    color: #eee;
  }
</style>
